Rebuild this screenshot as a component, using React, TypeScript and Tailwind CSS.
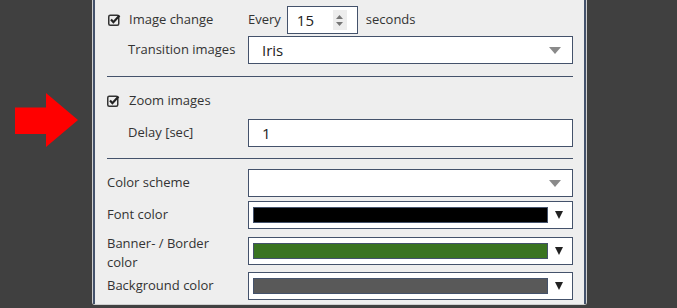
import React from "react";

const font = { fontFamily: '"Open Sans", "Noto Sans", sans-serif' };

function CheckMark() {
  return (
    <svg width="13" height="12" viewBox="0 0 13 12" className="shrink-0">
      <rect x="0.75" y="1.25" width="10" height="10" rx="1.5" fill="none" stroke="#333" strokeWidth="1.5" />
      <path d="M3 5.6 L5.4 8.2 L11.5 1.5" fill="none" stroke="#222" strokeWidth="2.2" />
    </svg>
  );
}

function GrayArrow() {
  return (
    <svg width="12" height="7" viewBox="0 0 12 7" className="shrink-0">
      <path d="M0 0 H12 L6 7 Z" fill="#8a8a8a" />
    </svg>
  );
}

function BlackArrow() {
  return (
    <svg width="8" height="8" viewBox="0 0 8 8" className="shrink-0">
      <path d="M0 0 H8 L4 8 Z" fill="#222" />
    </svg>
  );
}

function ColorSelect({ color }: { color: string }) {
  return (
    <div className="flex-1 h-[28px] bg-white border border-[#44526b] flex items-center pl-[4px] pr-[9px] gap-[7px]">
      <div className="flex-1 h-[16px] border border-[#44526b]" style={{ backgroundColor: color }} />
      <BlackArrow />
    </div>
  );
}

export default function App() {
  return (
    <div className="w-[677px] h-[308px] bg-[#404040] overflow-hidden" style={font}>
      <div className="relative h-full">
        {/* red pointer arrow */}
        <svg className="absolute left-[14px] top-[93px]" width="65" height="55" viewBox="0 0 65 55">
          <path d="M1 14.5 H32 V0 L64 27 L32 54 V41 H1 Z" fill="#ff0000" />
        </svg>

        <div className="absolute left-[92px] top-[-4px] w-[495px] h-[309px] border-x border-b border-[#cfcfcf] rounded-b-[3px]">
          <div className="h-full border-x-2 border-[#44526b] bg-[#eeeeee] pl-[12px] pr-[11px] pt-[10px] text-[13px] text-[#333]">
            {/* image change */}
            <div className="h-[28px] flex items-center">
              <div className="w-[141px] flex items-center gap-[8px] pl-[1px]">
                <CheckMark />
                <span>Image change</span>
              </div>
              <span className="mr-[6px]">Every</span>
              <div className="w-[71px] h-[28px] bg-white border border-[#44526b] flex items-center pl-[9px] pr-[10px]">
                <span className="flex-1 text-[15px] text-[#222]">15</span>
                <div className="w-[14px] h-[20px] bg-[#ededed] flex flex-col items-center justify-center gap-[3px]">
                  <svg width="7" height="4" viewBox="0 0 7 4"><path d="M0 4 L3.5 0 L7 4 Z" fill="#777" /></svg>
                  <svg width="7" height="4" viewBox="0 0 7 4"><path d="M0 0 H7 L3.5 4 Z" fill="#777" /></svg>
                </div>
              </div>
              <span className="ml-[8px]">seconds</span>
            </div>

            <div className="mt-[2px] h-[28px] flex items-center">
              <div className="w-[141px] pl-[21px]">Transition images</div>
              <div className="flex-1 h-[28px] bg-white border border-[#44526b] flex items-center pl-[13px] pr-[11px]">
                <span className="flex-1 text-[15px] text-[#222]">Iris</span>
                <GrayArrow />
              </div>
            </div>

            <div className="mt-[12px] h-px bg-[#44526b]" />

            {/* zoom images */}
            <div className="mt-[14px] h-[20px] flex items-center gap-[9px]">
              <CheckMark />
              <span>Zoom images</span>
            </div>

            <div className="mt-[8px] h-[28px] flex items-center">
              <div className="w-[141px] pl-[21px]">Delay [sec]</div>
              <div className="flex-1 h-[28px] bg-white border border-[#44526b] flex items-center pl-[13px]">
                <span className="text-[15px] text-[#222]">1</span>
              </div>
            </div>

            <div className="mt-[11px] h-px bg-[#44526b]" />

            {/* colours */}
            <div className="mt-[10px] h-[28px] flex items-center">
              <div className="w-[141px]">Color scheme</div>
              <div className="flex-1 h-[28px] bg-white border border-[#44526b] flex items-center justify-end pr-[11px]">
                <GrayArrow />
              </div>
            </div>

            <div className="mt-[4px] h-[28px] flex items-center">
              <div className="w-[141px]">Font color</div>
              <ColorSelect color="#000000" />
            </div>

            <div className="mt-[3px] h-[38px] flex items-center">
              <div className="w-[141px] leading-[19px] pt-[3px]">
                Banner- / Border
                <br />
                color
              </div>
              <ColorSelect color="#3a7421" />
            </div>

            <div className="mt-[2px] h-[28px] flex items-center">
              <div className="w-[141px]">Background color</div>
              <ColorSelect color="#595959" />
            </div>
          </div>
        </div>
      </div>
    </div>
  );
}
